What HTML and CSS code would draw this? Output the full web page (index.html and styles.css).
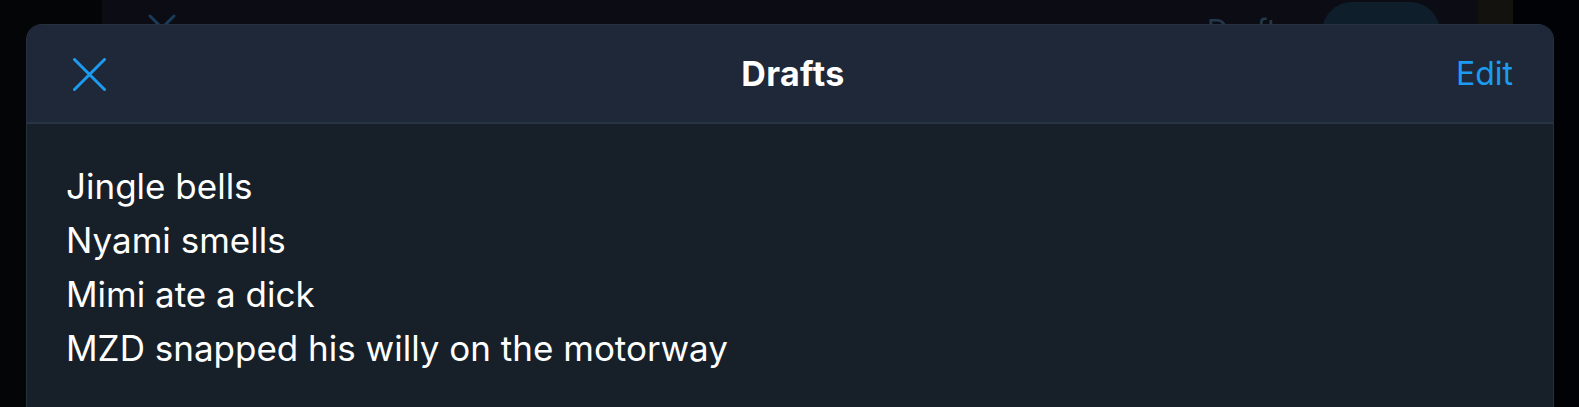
FILE: index.html
```html
<!DOCTYPE html>
<html lang="en">
<head>
<meta charset="utf-8">
<title>Drafts</title>
<link rel="stylesheet" href="styles.css">
</head>
<body>
<div class="backdrop">
  <div class="gutter"></div>
  <div class="sheet-behind">
    <svg class="behind-x" width="30" height="30" viewBox="0 0 30 30"><path d="M3 3 L27 27 M27 3 L3 27" stroke="#1b3c58" stroke-width="3" stroke-linecap="round" fill="none"/></svg>
    <div class="behind-right">
      <span class="behind-title">Drafts</span>
      <span class="behind-pill"></span>
    </div>
  </div>
  <div class="strip"></div>
  <div class="gutter-right"></div>
</div>
<div class="modal">
  <header class="modal-header">
    <button class="close" aria-label="Close">
      <svg width="33" height="33" viewBox="0 0 33 33"><path d="M1.5 1.5 L31.5 31.5 M31.5 1.5 L1.5 31.5" stroke="#1d9bf0" stroke-width="3" stroke-linecap="round" fill="none"/></svg>
    </button>
    <h1 class="title">Drafts</h1>
    <button class="edit">Edit</button>
  </header>
  <div class="modal-body">
    <p class="draft">Jingle bells<br>Nyami smells<br>Mimi ate a dick<br>MZD snapped his willy on the motorway</p>
  </div>
</div>
</body>
</html>
```
FILE: styles.css
```css
html, body {
  margin: 0;
  padding: 0;
  height: 100%;
  overflow: hidden;
}
body {
  background: #030405;
  font-family: Inter, "Noto Sans", "Liberation Sans", sans-serif;
  position: relative;
}
.backdrop {
  display: flex;
  height: 100%;
}
.gutter {
  width: 102px;
  background: #040507;
}
.sheet-behind {
  width: 1376px;
  background: #0b0c14;
  display: flex;
  justify-content: space-between;
  align-items: flex-start;
}
.behind-x {
  margin-left: 45px;
  margin-top: 13px;
}
.behind-right {
  display: flex;
  align-items: flex-start;
  margin-right: 38px;
}
.behind-title {
  color: #22384c;
  font-size: 30px;
  margin-top: 12px;
  margin-right: 30px;
}
.behind-pill {
  width: 118px;
  height: 60px;
  margin-top: 2px;
  border-radius: 30px;
  background: #0f1e2b;
}
.strip {
  width: 35px;
  background: #14120f;
}
.gutter-right {
  flex: 1;
  background: #000206;
}
.modal {
  position: absolute;
  left: 26px;
  top: 24px;
  bottom: 0;
  width: 1526px;
  border: 1px solid #263140;
  border-bottom: none;
  border-radius: 16px 16px 0 0;
  background: #172029;
  overflow: hidden;
}
.modal-header {
  height: 97px;
  background: #1e2838;
  border-bottom: 2px solid #283444;
  display: grid;
  grid-template-columns: 1fr auto 1fr;
  align-items: center;
  padding: 0 40px 0 46px;
}
.close {
  justify-self: start;
  background: none;
  border: none;
  padding: 0;
  display: flex;
  margin-top: 2px;
}
.title {
  margin: 0;
  color: #ffffff;
  font-size: 34px;
  font-weight: 700;
  letter-spacing: 0.4px;
}
.edit {
  justify-self: end;
  background: none;
  border: none;
  padding: 0;
  color: #1d9bf0;
  font-family: inherit;
  font-size: 32px;
  font-weight: 400;
}
.modal-body {
  padding: 35px 40px 0 39px;
}
.draft {
  margin: 0;
  color: #ffffff;
  font-size: 35px;
  line-height: 54px;
  letter-spacing: 0;
}
```
